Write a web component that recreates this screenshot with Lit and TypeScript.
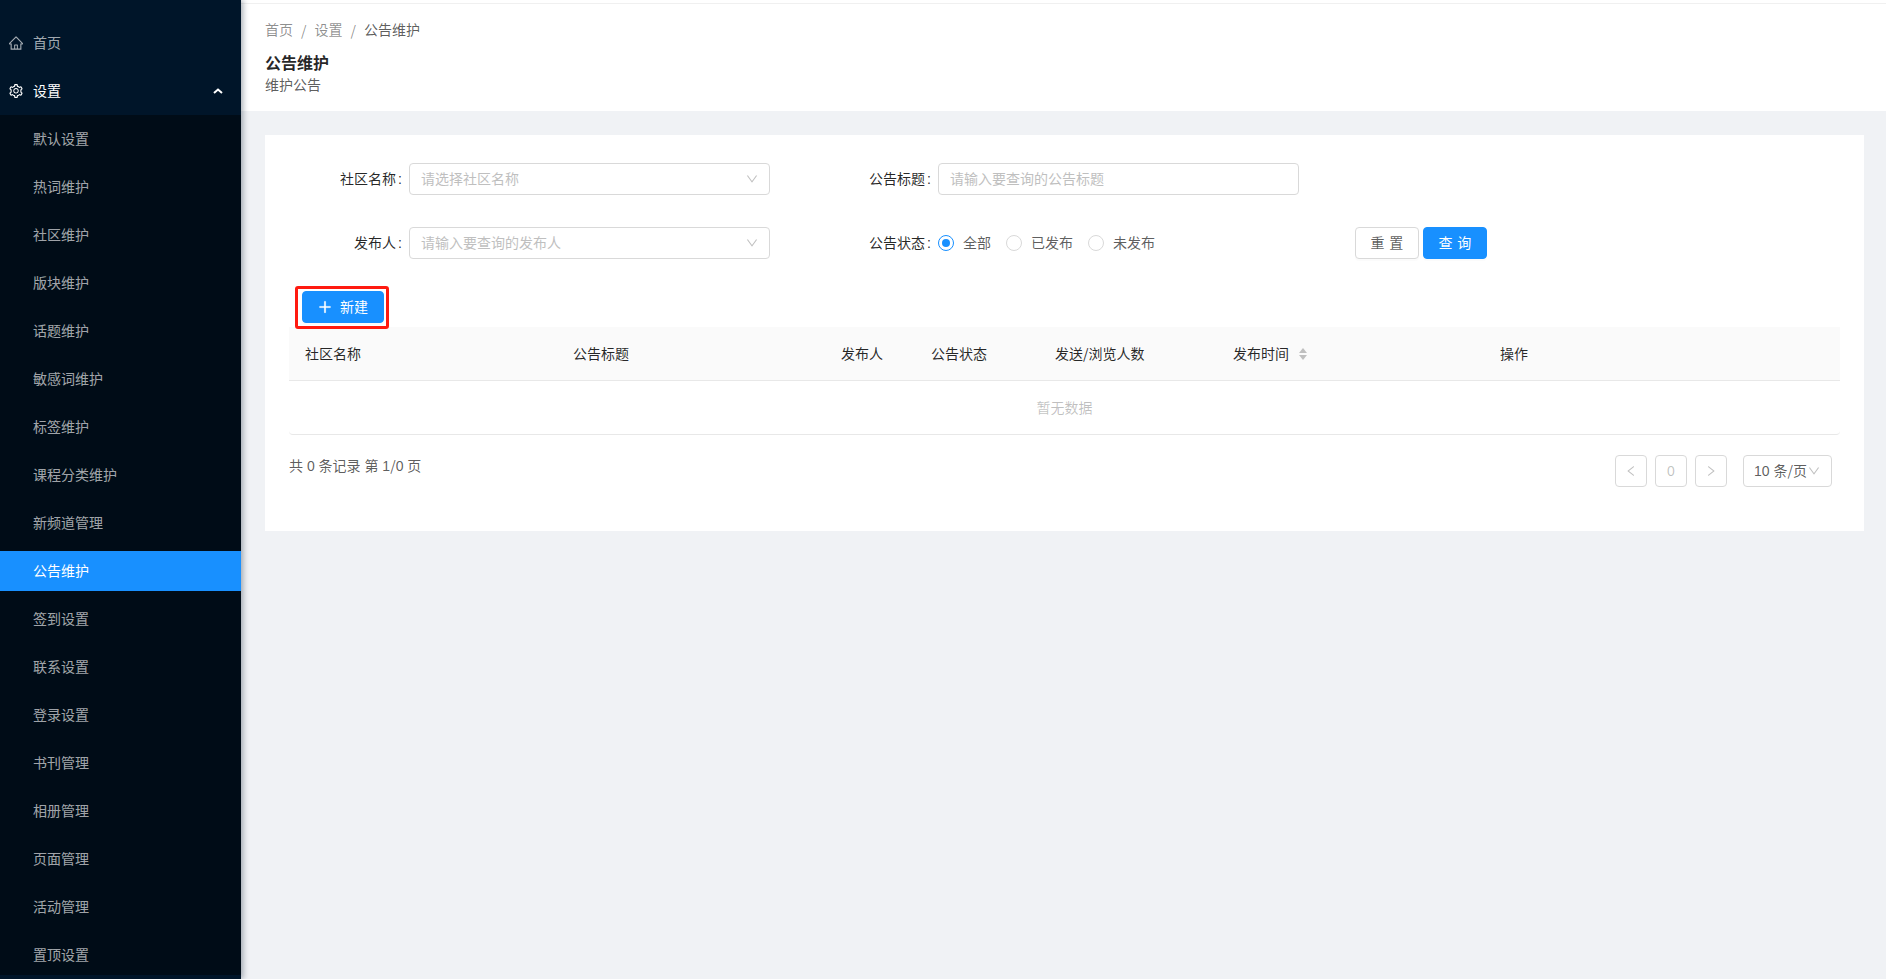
import { LitElement, html, css, svg } from "lit";
import { customElement } from "lit/decorators.js";

const PATHS = {
  home: "M946.5 505L560.1 118.8l-25.9-25.9a31.5 31.5 0 0 0-44.4 0L77.5 505a63.9 63.9 0 0 0-18.8 46c.4 35.2 29.7 63.3 64.9 63.3h42.5V940h691.8V614.3h43.4c17.1 0 33.2-6.7 45.3-18.8a63.6 63.6 0 0 0 18.7-45.3c0-17-6.7-33.1-18.8-45.2zM568 868H456V664h112v204zm217.9-325.7V868H632V640c0-22.1-17.9-40-40-40H432c-22.1 0-40 17.9-40 40v228H238.1V542.3h-96l370-369.7 23.1 23.1L882 542.3h-96.1z",
  setting: "M924.8 625.7l-65.5-56c3.1-19 4.7-38.4 4.7-57.8s-1.6-38.8-4.7-57.8l65.5-56a32.03 32.03 0 0 0 9.3-35.2l-.9-2.6a443.74 443.74 0 0 0-79.7-137.9l-1.8-2.1a32.12 32.12 0 0 0-35.1-9.5l-81.3 28.9c-30-24.6-63.5-44-99.7-57.6l-15.7-85a32.05 32.05 0 0 0-25.8-25.7l-2.7-.5c-52.1-9.4-106.9-9.4-159 0l-2.7.5a32.05 32.05 0 0 0-25.8 25.7l-15.8 85.4a351.86 351.86 0 0 0-99 57.4l-81.9-29.1a32 32 0 0 0-35.1 9.5l-1.8 2.1a446.02 446.02 0 0 0-79.7 137.9l-.9 2.6c-4.5 12.5-.8 26.5 9.3 35.2l66.3 56.6c-3.1 18.8-4.6 38-4.6 57.1 0 19.2 1.5 38.4 4.6 57.1L99 625.5a32.03 32.03 0 0 0-9.3 35.2l.9 2.6c18.1 50.4 44.9 96.9 79.7 137.9l1.8 2.1a32.12 32.12 0 0 0 35.1 9.5l81.9-29.1c29.8 24.5 63.1 43.9 99 57.4l15.8 85.4a32.05 32.05 0 0 0 25.8 25.7l2.7.5a449.4 449.4 0 0 0 159 0l2.7-.5a32.05 32.05 0 0 0 25.8-25.7l15.7-85a350 350 0 0 0 99.7-57.6l81.3 28.9a32 32 0 0 0 35.1-9.5l1.8-2.1c34.8-41.1 61.6-87.5 79.7-137.9l.9-2.6c4.5-12.3.8-26.3-9.3-35zM788.3 465.9c2.5 15.1 3.8 30.6 3.8 46.1s-1.3 31-3.8 46.1l-6.6 40.1 74.7 63.9a370.03 370.03 0 0 1-42.6 73.6L721 702.8l-31.4 25.8c-23.9 19.6-50.5 35-79.3 45.8l-38.1 14.3-17.9 97a377.5 377.5 0 0 1-85 0l-17.9-97.2-37.8-14.5c-28.5-10.8-55-26.2-78.7-45.7l-31.4-25.9-93.4 33.2c-17-22.9-31.2-47.6-42.6-73.6l75.5-64.5-6.5-40c-2.4-14.9-3.7-30.3-3.7-45.5 0-15.3 1.2-30.6 3.7-45.5l6.5-40-75.5-64.5c11.3-26.1 25.6-50.7 42.6-73.6l93.4 33.2 31.4-25.9c23.7-19.5 50.2-34.9 78.7-45.7l37.9-14.3 17.9-97.2c28.1-3.2 56.8-3.2 85 0l17.9 97 38.1 14.3c28.7 10.8 55.4 26.2 79.3 45.8l31.4 25.8 92.8-32.9c17 22.9 31.2 47.6 42.6 73.6L781.8 426l6.5 39.9zM512 326c-97.2 0-176 78.8-176 176s78.8 176 176 176 176-78.8 176-176-78.8-176-176-176zm79.2 255.2A111.6 111.6 0 0 1 512 614c-29.9 0-58-11.7-79.2-32.8A111.6 111.6 0 0 1 400 502c0-29.9 11.7-58 32.8-79.2C454 401.6 482.1 390 512 390c29.9 0 58 11.6 79.2 32.8A111.6 111.6 0 0 1 624 502c0 29.9-11.7 58-32.8 79.2z",
  down: "M884 256h-75c-5.1 0-9.9 2.5-12.9 6.6L512 654.2 227.9 262.6c-3-4.1-7.8-6.6-12.9-6.6h-75c-6.5 0-10.3 7.4-6.5 12.7l352.6 486.1c12.8 17.6 39 17.6 51.7 0l352.6-486.1c3.9-5.3.1-12.7-6.4-12.7z",
  left: "M724 218.3V141c0-6.7-7.7-10.4-12.9-6.3L260.3 486.8a31.86 31.86 0 0 0 0 50.3l450.8 352.1c5.3 4.1 12.9.4 12.9-6.3v-77.3c0-4.9-2.3-9.6-6.1-12.6l-360-281 360-281.1c3.8-3 6.1-7.7 6.1-12.6z",
  right: "M765.7 486.8L314.9 134.7A7.97 7.97 0 0 0 302 141v77.3c0 4.9 2.3 9.6 6.1 12.6l360 281.1-360 281.1c-3.9 3-6.1 7.7-6.1 12.6V883c0 6.7 7.7 10.4 12.9 6.3l450.8-352.1a31.96 31.96 0 0 0 0-50.4z",
  plus: "M482 152h60q8 0 8 8v704q0 8-8 8h-60q-8 0-8-8V160q0-8 8-8zM176 474h672q8 0 8 8v60q0 8-8 8H176q-8 0-8-8v-60q0-8 8-8z",
};

const icon = (name: keyof typeof PATHS, cls: string) =>
  html`<svg class=${cls} viewBox="64 64 896 896" fill="currentColor">${svg`<path d=${PATHS[name]}></path>`}</svg>`;

const SUB_ITEMS = [
  "默认设置", "热词维护", "社区维护", "版块维护", "话题维护", "敏感词维护", "标签维护",
  "课程分类维护", "新频道管理", "公告维护", "签到设置", "联系设置", "登录设置", "书刊管理",
  "相册管理", "页面管理", "活动管理", "置顶设置",
];

@customElement("app-root")
export class AppRoot extends LitElement {
  static styles = css`
    :host {
      display: flex;
      height: 979px;
      overflow: hidden;
      background: #f0f2f5;
      font-family: "Liberation Sans", "Noto Sans CJK SC", sans-serif;
      font-size: 14px;
      line-height: 22px;
      color: rgba(0, 0, 0, 0.65);
    }
    * { box-sizing: border-box; }
    .sl { font-family: "Noto Sans CJK SC", sans-serif; }
    .inl { line-height: 0; }

    .sider {
      flex: 0 0 241px;
      height: 979px;
      overflow: hidden;
      background: #001529;
      box-shadow: 2px 0 6px rgba(0, 21, 41, 0.35);
      position: relative;
      z-index: 2;
      padding-top: 23px;
    }
    .item {
      height: 40px;
      display: flex;
      align-items: center;
      color: rgba(255, 255, 255, 0.65);
      padding-left: 33px;
    }
    .top { padding-left: 9px; margin-bottom: 8px; }
    .top.open { color: #fff; margin-bottom: 4px; padding-right: 18px; }
    .mi { width: 14px; height: 14px; margin-right: 10px; flex: none; }
    .arrow { width: 10px; height: 6px; margin-left: auto; flex: none; }
    .sub { background: #000c17; padding-top: 4px; }
    .sub .item { margin-bottom: 8px; }
    .sub .item.active { background: #1890ff; color: #fff; }

    .main { flex: 1; min-width: 0; display: flex; flex-direction: column; }
    .band { height: 4px; background: #fff; border-bottom: 1px solid #f0f0f0; }
    .head { background: #fff; padding: 15px 24px 15px; height: 107px; }
    .crumbs { display: flex; height: 22px; align-items: center; color: rgba(0, 0, 0, 0.45); }
    .crumbs .sep { margin: 0 8px; }
    .crumbs .last { color: rgba(0, 0, 0, 0.65); }
    .title { margin-top: 11px; font-size: 16px; line-height: 24px; font-weight: 700; color: rgba(0, 0, 0, 0.85); }
    .desc { line-height: 22px; margin-top: -2px; }

    .content { padding: 24px 22px 0 24px; }
    .card { background: #fff; padding: 28px 24px 44px; }

    .row { display: flex; margin-bottom: 32px; height: 32px; align-items: center; }
    .field { flex: 0 0 529px; display: flex; align-items: center; }
    .label { width: 120px; padding-right: 7px; text-align: right; color: rgba(0, 0, 0, 0.85); flex: none; }
    .colon { margin-left: 2px; }
    .control {
      width: 361px;
      height: 32px;
      border: 1px solid #d9d9d9;
      border-radius: 4px;
      padding: 0 11px;
      display: flex;
      align-items: center;
      justify-content: space-between;
      color: #bfbfbf;
      background: #fff;
      font: inherit;
      outline: none;
    }
    .control::placeholder { color: #bfbfbf; opacity: 1; }
    .chev { width: 12px; height: 12px; color: rgba(0, 0, 0, 0.25); flex: none; }

    .radios { display: flex; align-items: center; }
    .radio { width: 16px; height: 16px; border: 1px solid #d9d9d9; border-radius: 50%; flex: none; display: flex; align-items: center; justify-content: center; }
    .radio.on { border-color: #1890ff; }
    .radio.on::after { content: ""; width: 8px; height: 8px; border-radius: 50%; background: #1890ff; }
    .rtext { margin: 0 15px 0 9px; }

    .actions { display: flex; gap: 4px; margin-left: 8px; }
    .btn {
      width: 64px;
      height: 32px;
      border-radius: 4px;
      border: 1px solid #d9d9d9;
      background: #fff;
      font: inherit;
      color: rgba(0, 0, 0, 0.65);
      display: flex;
      align-items: center;
      justify-content: center;
      padding: 0;
      box-shadow: 0 2px 0 rgba(0, 0, 0, 0.015);
    }
    .btn.primary { background: #1890ff; border-color: #1890ff; color: #fff; }
    .btn .spaced { letter-spacing: 0.34em; margin-right: -0.34em; }

    .tools { height: 32px; margin-bottom: 4px; padding-left: 13px; }
    .newwrap { position: relative; display: inline-block; vertical-align: top; }
    .new { width: 82px; gap: 8px; }
    .plus { width: 14px; height: 14px; stroke: currentColor; stroke-width: 36; }
    .mark {
      position: absolute;
      left: -7px;
      top: -5px;
      width: 94px;
      height: 43px;
      border: 3.5px solid #ff1a10;
      border-radius: 3px;
      pointer-events: none;
    }

    .thead {
      display: grid;
      grid-template-columns: 268px 268px 90px 124px 178px 267px 356px;
      height: 54px;
      align-items: center;
      background: #fafafa;
      border-bottom: 1px solid #e8e8e8;
      color: rgba(0, 0, 0, 0.85);
    }
    .th { padding-left: 16px; display: flex; align-items: center; }
    .sort { width: 8px; height: 12px; margin-left: 10px; color: #bfbfbf; flex: none; }
    .empty {
      height: 54px;
      display: flex;
      align-items: center;
      justify-content: center;
      color: rgba(0, 0, 0, 0.25);
      border-bottom: 1px solid #e8e8e8;
      border-radius: 0 0 4px 4px;
    }

    .foot { display: flex; margin-top: 20px; justify-content: space-between; align-items: flex-start; }
    .total { line-height: 22px; }
    .pager { display: flex; padding-right: 8px; align-items: center; }
    .pg {
      width: 32px;
      height: 32px;
      border: 1px solid #d9d9d9;
      border-radius: 4px;
      margin-right: 8px;
      display: flex;
      align-items: center;
      justify-content: center;
      color: rgba(0, 0, 0, 0.25);
    }
    .pg svg { width: 12px; height: 12px; }
    .size {
      width: 89px;
      height: 32px;
      margin-left: 8px;
      border: 1px solid #d9d9d9;
      border-radius: 4px;
      padding: 0 11px 0 10px;
      display: flex;
      align-items: center;
      justify-content: space-between;
      white-space: nowrap;
    }
  `;

  render() {
    const slash = html`<span class="sl inl">/</span>`;
    return html`
      <aside class="sider">
        <div class="item top">${icon("home", "mi")}首页</div>
        <div class="item top open">
          ${icon("setting", "mi")}设置
          <svg class="arrow" viewBox="0 0 10 6" fill="none" stroke="currentColor" stroke-width="2"><path d="M1 5L5 1.5L9 5"></path></svg>
        </div>
        <div class="sub">
          ${SUB_ITEMS.map((t) => html`<div class="item ${t === "公告维护" ? "active" : ""}">${t}</div>`)}
        </div>
      </aside>
      <div class="main">
        <div class="band"></div>
        <header class="head">
          <div class="crumbs">
            <span>首页</span><span class="sep sl">/</span><span>设置</span><span class="sep sl">/</span><span class="last">公告维护</span>
          </div>
          <div class="title">公告维护</div>
          <div class="desc">维护公告</div>
        </header>
        <div class="content">
          <section class="card">
            <div class="row">
              <div class="field">
                <span class="label">社区名称<span class="colon">:</span></span>
                <div class="control"><span>请选择社区名称</span>${icon("down", "chev")}</div>
              </div>
              <div class="field">
                <span class="label">公告标题<span class="colon">:</span></span>
                <input class="control" placeholder="请输入要查询的公告标题" />
              </div>
            </div>
            <div class="row">
              <div class="field">
                <span class="label">发布人<span class="colon">:</span></span>
                <div class="control"><span>请输入要查询的发布人</span>${icon("down", "chev")}</div>
              </div>
              <div class="field">
                <span class="label">公告状态<span class="colon">:</span></span>
                <div class="radios">
                  <span class="radio on"></span><span class="rtext">全部</span>
                  <span class="radio"></span><span class="rtext">已发布</span>
                  <span class="radio"></span><span class="rtext">未发布</span>
                </div>
              </div>
              <div class="actions">
                <button class="btn"><span class="spaced">重置</span></button>
                <button class="btn primary"><span class="spaced">查询</span></button>
              </div>
            </div>
            <div class="tools">
              <span class="newwrap">
                <button class="btn primary new">${icon("plus", "plus")}<span>新建</span></button>
                <span class="mark"></span>
              </span>
            </div>
            <div class="thead">
              <div class="th">社区名称</div>
              <div class="th">公告标题</div>
              <div class="th">发布人</div>
              <div class="th">公告状态</div>
              <div class="th"><span>发送${slash}浏览人数</span></div>
              <div class="th">
                发布时间
                <svg class="sort" viewBox="0 0 8 12" fill="currentColor"><path d="M4 0L8 5H0Z"></path><path d="M0 7H8L4 12Z"></path></svg>
              </div>
              <div class="th">操作</div>
            </div>
            <div class="empty">暂无数据</div>
            <div class="foot">
              <div class="total">共 0 条记录 第 1${slash}0 页</div>
              <div class="pager">
                <div class="pg">${icon("left", "")}</div>
                <div class="pg">0</div>
                <div class="pg">${icon("right", "")}</div>
                <div class="size"><span>10 条${slash}页</span>${icon("down", "chev")}</div>
              </div>
            </div>
          </section>
        </div>
      </div>
    `;
  }
}
